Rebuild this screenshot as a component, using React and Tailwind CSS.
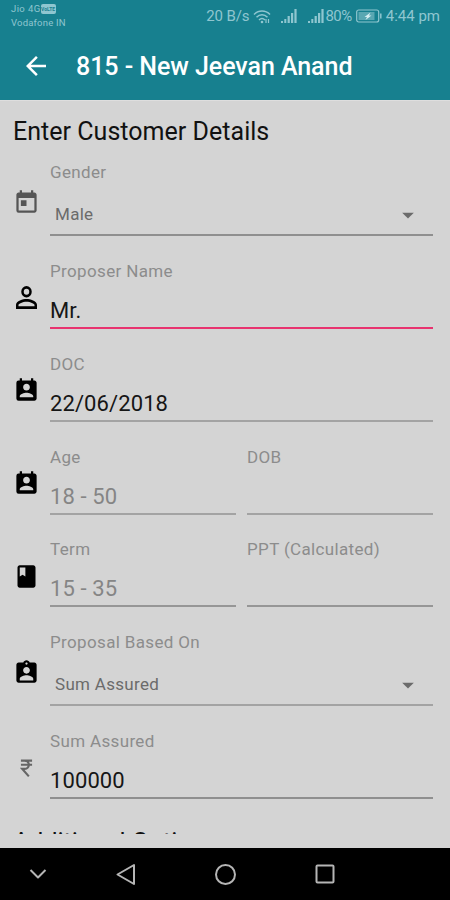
import { MdArrowBack, MdToday, MdPermContactCalendar, MdClass, MdAssignmentInd, MdArrowDropDown } from 'react-icons/md'

function PersonIcon() {
  return (
    <svg viewBox="4 4 16 16" preserveAspectRatio="none" className="w-[21px] h-[23px]" fill="currentColor">
      <path d="M12 5.900a2.100 2.100 0 1 1 0 4.200 2.100 2.100 0 0 1 0-4.200m0 9c2.970 0 6.100 1.460 6.100 2.100v1.100H5.900v-1.100c0-.64 3.130-2.100 6.100-2.100M12 4a4 4 0 1 0 0 8 4 4 0 0 0 0-8m0 9c-2.670 0-8 1.340-8 4v3h16v-3c0-2.660-5.330-4-8-4" />
    </svg>
  )
}

function RupeeIcon() {
  return (
    <svg viewBox="0 0 14 20" className="w-[13px] h-5" fill="none" stroke="currentColor" strokeWidth="2.300">
      <path d="M1 2h12M1 6.500h12M1.500 2H5c6 0 6 9 0 9H2.500L9.500 19" />
    </svg>
  )
}

function Wifi() {
  return (
    <svg viewBox="0 0 18 15" className="w-[18px] h-[15px]" fill="none" stroke="currentColor" strokeWidth="1.500">
      <path d="M1 5.500c4.500-4.700 11.500-4.700 16 0M3.500 8.300c3.300-3.300 7.700-3.300 11 0M6 11c2-2 4-2 6 0" />
      <circle cx="9" cy="13" r="1.300" fill="currentColor" stroke="none" />
      <path d="M13 10v4M15.500 14v-4" strokeWidth="1.200" />
    </svg>
  )
}

function Signal() {
  return (
    <svg viewBox="0 0 16 14" className="w-4 h-3.5" fill="currentColor">
      <path d="M0 12h2v2H0zM3.300 10h2v4h-2zM6.600 7h2.200v7H6.600zM10 4h2.200v10H10zM13.400 0h2.200v14h-2.200z" />
    </svg>
  )
}

function Battery() {
  return (
    <svg viewBox="0 0 26 14" className="w-[26px] h-3.5" fill="none" stroke="currentColor">
      <rect x="0.700" y="1" width="22" height="12" rx="2" strokeWidth="1.200" />
      <rect x="2.500" y="3" width="16" height="8" fill="currentColor" stroke="none" opacity="0.550" />
      <path d="M24.800 4.500v5" strokeWidth="1.500" />
      <path d="M14.500 3.500 8.500 8h2.500l-1.500 3 6-4.500H13z" fill="#d5eef2" stroke="none" />
    </svg>
  )
}

function StatusBar() {
  return (
    <div className="flex h-8 justify-between pl-[11px] pr-[10px] text-[#8fc6d0]">
      <div className="pt-0.5 text-[9.5px] leading-[14px] tracking-[0.2px]">
        <div className="flex items-center">
          <span className="tracking-[0.4px]">Jio 4G</span>
          <span className="flex h-2.5 w-[15px] items-center justify-center rounded-[2px] bg-[#8fc6d0] text-[5px] font-bold tracking-normal text-[#17808f]">VoLTE</span>
        </div>
        <div>Vodafone IN</div>
      </div>
      <div className="flex items-center text-[15px]">
        <span className="tracking-[-0.1px]">20 B/s</span>
        <span className="ml-1"><Wifi /></span>
        <span className="ml-2.5"><Signal /></span>
        <span className="ml-[11px]"><Signal /></span>
        <span className="ml-px tracking-[-0.5px]">80%</span>
        <span className="ml-1"><Battery /></span>
        <span className="ml-1">4:44 pm</span>
      </div>
    </div>
  )
}

function Field({ label, value, hint, focused, line = 'border-[#a3a3a3]' }) {
  return (
    <div className="flex-1">
      <div className="h-5 text-[17px] leading-5 tracking-[0.35px] text-[#8c8c8c]">{label}</div>
      <div
        className={`h-12 border-b-2 pt-[18px] text-[22px] leading-6 tracking-[0.1px] ${focused ? 'border-[#e8336f]' : line} ${
          hint ? 'text-[#858585]' : 'text-[#161616]'
        }`}
      >
        {value}
      </div>
    </div>
  )
}

function Select({ label, value, line }) {
  return (
    <div className="flex-1">
      <div className="h-5 text-[17px] leading-5 tracking-[0.35px] text-[#8c8c8c]">{label}</div>
      <div className={`flex h-[54px] items-center justify-between border-b-2 pl-[5px] pr-[11px] pt-3.5 text-[17px] tracking-[0.3px] text-[#6b6b6b] ${line}`}>
        <span>{value}</span>
        <MdArrowDropDown size={28} />
      </div>
    </div>
  )
}

function Row({ icon, children }) {
  return (
    <div className="mb-[24.8px] flex pl-3 pr-[17px]">
      <div className="mr-2.5 flex w-7 items-center justify-center pt-1.5 text-black">{icon}</div>
      <div className="flex flex-1 gap-[11px]">{children}</div>
    </div>
  )
}

export default function App() {
  return (
    <div className="flex h-[900px] w-[450px] flex-col overflow-hidden bg-[#d4d4d4] font-['Roboto',sans-serif]">
      <header className="h-[100px] shrink-0 bg-[#17808f]">
        <StatusBar />
        <div className="flex h-[68px] items-center pl-[21px] text-white">
          <MdArrowBack size={30} />
          <h1 className="ml-[25px] pt-0.5 text-[25px] font-medium tracking-[-0.05px]">815 - New Jeevan Anand</h1>
        </div>
      </header>

      <main className="h-[734px] shrink-0 overflow-hidden border-t border-[#dedede]">
        <h2 className="h-[61.2px] pl-[13px] pt-[15px] text-[25px] leading-8 tracking-[0.03px] text-[#111]">Enter Customer Details</h2>

        <Row icon={<MdToday size={27} className="text-[#555]" />}>
          <Select label="Gender" value="Male" line="border-[#8f8f8f]" />
        </Row>
        <Row icon={<PersonIcon />}>
          <Field label="Proposer Name" value="Mr." focused />
        </Row>
        <Row icon={<MdPermContactCalendar size={27} />}>
          <Field label="DOC" value="22/06/2018" />
        </Row>
        <Row icon={<MdPermContactCalendar size={27} />}>
          <Field label="Age" value="18 - 50" hint />
          <Field label="DOB" />
        </Row>
        <Row icon={<MdClass size={27} />}>
          <Field label="Term" value="15 - 35" hint line="border-[#969696]" />
          <Field label="PPT (Calculated)" line="border-[#969696]" />
        </Row>
        <Row icon={<MdAssignmentInd size={27} />}>
          <Select label="Proposal Based On" value="Sum Assured" line="border-[#a3a3a3]" />
        </Row>
        <Row icon={<span className="text-[#666]"><RupeeIcon /></span>}>
          <Field label="Sum Assured" value="100000" line="border-[#8f8f8f]" />
        </Row>

        <h2 className="pl-[13px] pt-[3px] text-[25px] leading-8 text-[#111]">Additional Options</h2>
      </main>

      <nav className="mt-auto flex h-[52px] shrink-0 items-center bg-black pl-[27px] text-[#b5b5b5]">
        <svg viewBox="0 0 310 26" className="h-[26px] w-[310px]" fill="none" stroke="currentColor" strokeWidth="2" strokeLinejoin="round">
          <path d="M3.500 9l7.500 7.500L18.500 9" />
          <path d="M107 4v19L90.500 13.500z" />
          <circle cx="198.500" cy="13.500" r="9.500" />
          <rect x="289.500" y="4.500" width="17" height="17" rx="1" />
        </svg>
      </nav>
    </div>
  )
}
